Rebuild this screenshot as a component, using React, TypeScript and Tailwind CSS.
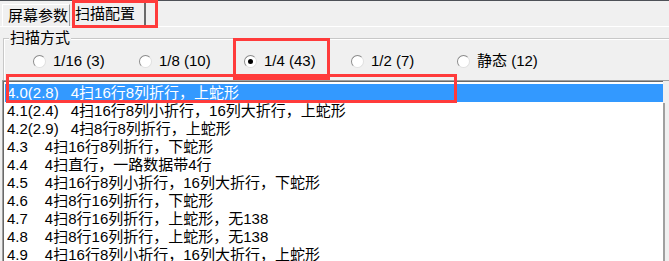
import * as React from "react";

const FONT = "font-['Liberation_Sans','Noto_Sans_CJK_SC',sans-serif]";

const MODES = [
  { label: "1/16 (3)", checked: false, w: "w-[106px]" },
  { label: "1/8 (10)", checked: false, w: "w-[105px]" },
  { label: "1/4 (43)", checked: true, w: "w-[107px]" },
  { label: "1/2 (7)", checked: false, w: "w-[106px]" },
  { label: "静态 (12)", checked: false, w: "w-[110px]" },
];

const ROWS: { code: string; text: string; selected?: boolean }[] = [
  { code: "4.0(2.8)", text: "4扫16行8列折行，上蛇形", selected: true },
  { code: "4.1(2.4)", text: "4扫16行8列小折行，16列大折行，上蛇形" },
  { code: "4.2(2.9)", text: "4扫8行8列折行，上蛇形" },
  { code: "4.3", text: "4扫16行8列折行，下蛇形" },
  { code: "4.4", text: "4扫直行，一路数据带4行" },
  { code: "4.5", text: "4扫16行8列小折行，16列大折行，下蛇形" },
  { code: "4.6", text: "4扫8行16列折行，下蛇形" },
  { code: "4.7", text: "4扫8行16列折行，上蛇形，无138" },
  { code: "4.8", text: "4扫8行16列折行，上蛇形，无138" },
  { code: "4.9", text: "4扫16行8列小折行，16列大折行，上蛇形" },
];

function Radio({ checked }: { checked: boolean }) {
  return (
    <span className="flex h-[13px] w-[13px] flex-none items-center justify-center rounded-full border border-t-[#8a8a8a] border-l-[#8a8a8a] border-r-[#e0e0e0] border-b-[#e0e0e0] bg-white">
      {checked && <span className="h-[5px] w-[5px] rounded-full bg-black" />}
    </span>
  );
}

export default function App() {
  return (
    <div
      className={`relative h-[261px] w-[669px] overflow-hidden bg-[#f0f0f0] text-[15px] leading-[18px] text-black ${FONT}`}
    >
      <div className="h-px bg-[#4d5157]" />

      {/* tab strip */}
      <div className="flex h-[25px] items-end pl-[2px]">
        <div className="flex h-[22px] w-[68px] items-center border-l border-t border-white pl-[5px] border-r border-r-[#a0a0a0]">
          屏幕参数
        </div>
        <div className="flex h-[25px] w-[76px] items-center border-r-2 border-r-[#6a6a6a] border-t border-t-white pl-[5px]">
          扫描配置
        </div>
      </div>
      <div className="h-px bg-white" />

      {/* scan mode group */}
      <div className="mt-[11px] ml-[3px] h-[42px] border-l border-t border-[#c8c8c8] shadow-[inset_1px_1px_0_#ffffff]">
        <div className="-mt-[10px] ml-[5px] w-fit bg-[#f0f0f0] px-[1px] leading-[18px]">
          扫描方式
        </div>
        <div className="mt-[5px] flex items-center pl-[29px]">
          {MODES.map((m) => (
            <div key={m.label} className={`flex items-center gap-[7px] ${m.w}`}>
              <Radio checked={m.checked} />
              <span className="whitespace-pre">{m.label}</span>
            </div>
          ))}
        </div>
      </div>

      {/* list box */}
      <div className="ml-[2px] flex h-[182px] border-t border-t-[#a0a0a0] border-l border-l-[#a0a0a0]">
        <div className="flex-1 border-t border-t-[#696969] border-l border-l-[#696969] bg-white pt-[2px] pl-[1px]">
          {ROWS.map((r) => (
            <div
              key={r.code}
              className={`flex h-[18px] items-center whitespace-nowrap pl-[2px] ${
                r.selected ? "bg-[#3399ff] text-white" : ""
              }`}
            >
              <span className={r.code.length > 3 ? "mr-[12px]" : "mr-[17px]"}>{r.code}</span>
              <span>{r.text}</span>
            </div>
          ))}
        </div>
        <div className="w-[6px] flex-none bg-[#f0f0f0]">
          <div className="mt-[22px] h-full border-l-2 border-[#a0a0a0]" />
        </div>
      </div>

      {/* annotation boxes */}
      <div className="pointer-events-none absolute left-[72px] top-0 h-[28px] w-[86px] border-[3px] border-[#ff3b3b]" />
      <div className="pointer-events-none absolute left-[233px] top-[38px] h-[42px] w-[97px] border-[3px] border-[#ff3b3b]" />
      <div className="pointer-events-none absolute left-[6px] top-[74px] h-[29px] w-[451px] border-[3px] border-[#ff3b3b]" />
    </div>
  );
}
